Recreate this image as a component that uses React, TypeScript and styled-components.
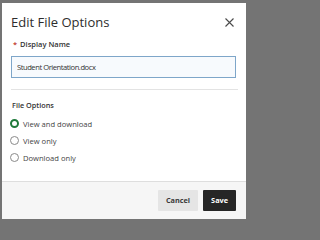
import { FC } from 'react';
import styled, { createGlobalStyle } from 'styled-components';

const GlobalStyle = createGlobalStyle`
  html, body {
    margin: 0;
    padding: 0;
    background: #747474;
    overflow: hidden;
  }
  * {
    box-sizing: border-box;
  }
`;

const Dialog = styled.div`
  margin: 3px 3px 0 2px;
  width: 244px;
  height: 216px;
  background: #ffffff;
  display: flex;
  flex-direction: column;
  font-family: 'Open Sans', 'Noto Sans', sans-serif;
  color: #333333;
`;

const Header = styled.div`
  display: flex;
  justify-content: space-between;
  align-items: center;
  padding: 10px 12px 0 9px;
`;

const Title = styled.h2`
  margin: 0;
  font-size: 13px;
  line-height: 18px;
  font-weight: 400;
  color: #2d2d2d;
`;

const CloseButton = styled.button`
  border: none;
  background: none;
  padding: 0;
  width: 10px;
  height: 10px;
  display: flex;
  align-items: center;
  justify-content: center;
  color: #4a4a4a;
`;

const Body = styled.div`
  flex: 1;
  padding: 0 9px;
  display: flex;
  flex-direction: column;
`;

const FieldLabel = styled.label`
  margin-top: 7px;
  font-size: 7.5px;
  line-height: 12px;
  font-weight: 600;
  color: #333333;
  padding-left: 2px;
`;

const Required = styled.span`
  color: #c0392b;
  margin-right: 3px;
`;

const TextInput = styled.input`
  margin-top: 6px;
  width: 225px;
  height: 22px;
  border: 1px solid #7ea6c9;
  background: #f7fafd;
  padding: 0 5px;
  font-family: 'Open Sans', 'Noto Sans', sans-serif;
  font-size: 7.6px;
  letter-spacing: -0.45px;
  color: #333333;
  outline: none;
`;

const Divider = styled.hr`
  margin: 11px 0 0 0;
  border: none;
  border-top: 1px solid #e3e3e3;
  width: 227px;
`;

const GroupLabel = styled.div`
  margin-top: 9px;
  font-size: 7.3px;
  line-height: 12px;
  font-weight: 600;
  color: #333333;
  padding-left: 1px;
`;

const RadioList = styled.div`
  margin-top: 4px;
  display: flex;
  flex-direction: column;
`;

const RadioRow = styled.label`
  display: flex;
  align-items: center;
  height: 17px;
  gap: 4px;
  font-size: 7.6px;
  color: #444444;
`;

const RadioDot = styled.span<{ $checked?: boolean }>`
  width: 9px;
  height: 9px;
  border-radius: 50%;
  margin-left: -1px;
  border: ${({ $checked }) => ($checked ? '2.5px solid #1f7a3b' : '1px solid #8a8a8a')};
  background: #ffffff;
`;

const Footer = styled.div`
  height: 38px;
  border-top: 1px solid #dedede;
  background: #f6f6f6;
  display: flex;
  justify-content: flex-end;
  align-items: center;
  gap: 5px;
  padding: 0 10px 1px 0;
`;

const Button = styled.button<{ $primary?: boolean }>`
  height: 21px;
  padding: 0 8px;
  border: none;
  border-radius: 1px;
  font-family: 'Open Sans', 'Noto Sans', sans-serif;
  font-size: 7.3px;
  font-weight: 700;
  background: ${({ $primary }) => ($primary ? '#262626' : '#e5e5e5')};
  color: ${({ $primary }) => ($primary ? '#ffffff' : '#3a3a3a')};
`;

const options = [
  { label: 'View and download', checked: true },
  { label: 'View only', checked: false },
  { label: 'Download only', checked: false },
];

const App: FC = () => {
  return (
    <>
      <GlobalStyle />
      <Dialog>
        <Header>
          <Title>Edit File Options</Title>
          <CloseButton aria-label="Close">
            <svg width="9" height="9" viewBox="0 0 9 9">
              <path d="M0.5 0.5 L8.5 8.5 M8.5 0.5 L0.5 8.5" stroke="currentColor" strokeWidth="1.1" fill="none" />
            </svg>
          </CloseButton>
        </Header>
        <Body>
          <FieldLabel>
            <Required>*</Required>Display Name
          </FieldLabel>
          <TextInput defaultValue="Student Orientation.docx" />
          <Divider />
          <GroupLabel>File Options</GroupLabel>
          <RadioList>
            {options.map((o) => (
              <RadioRow key={o.label}>
                <RadioDot $checked={o.checked} />
                {o.label}
              </RadioRow>
            ))}
          </RadioList>
        </Body>
        <Footer>
          <Button>Cancel</Button>
          <Button $primary>Save</Button>
        </Footer>
      </Dialog>
    </>
  );
};

export default App;
